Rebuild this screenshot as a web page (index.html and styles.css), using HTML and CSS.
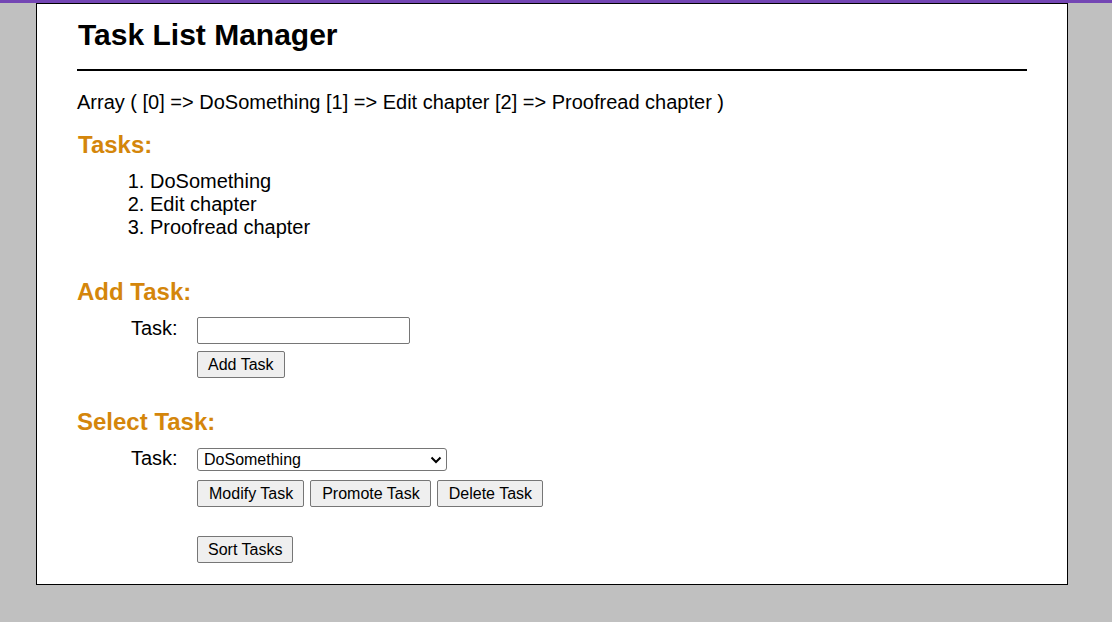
FILE: index.html
```html
<!DOCTYPE html>
<html lang="en">
<head>
<meta charset="utf-8">
<title>Task List Manager</title>
<link rel="stylesheet" href="styles.css">
</head>
<body>
<div class="page">
  <h1 class="title">Task List Manager</h1>
  <hr class="rule">
  <p class="dump">Array ( [0] =&gt; DoSomething [1] =&gt; Edit chapter [2] =&gt; Proofread chapter )</p>

  <h2 class="section-title section-title--tasks">Tasks:</h2>
  <ol class="task-list">
    <li>DoSomething</li>
    <li>Edit chapter</li>
    <li>Proofread chapter</li>
  </ol>

  <h2 class="section-title section-title--add">Add Task:</h2>
  <form class="task-form task-form--add">
    <label class="field-label field-label--add" for="newtask">Task:</label>
    <div class="controls">
      <input class="text-input" id="newtask" type="text">
      <div class="button-row button-row--add">
        <button class="btn btn--narrow" type="button">Add Task</button>
      </div>
    </div>
  </form>

  <h2 class="section-title section-title--select">Select Task:</h2>
  <form class="task-form task-form--select">
    <label class="field-label field-label--select" for="seltask">Task:</label>
    <div class="controls">
      <span class="select-wrap">
        <select class="select-input" id="seltask">
          <option>DoSomething</option>
          <option>Edit chapter</option>
          <option>Proofread chapter</option>
        </select>
        <svg class="select-arrow" width="12" height="8" viewBox="0 0 12 8" aria-hidden="true">
          <path d="M1.5 1.5 L6 6 L10.5 1.5" fill="none" stroke="#000" stroke-width="2" stroke-linecap="butt" stroke-linejoin="miter"/>
        </svg>
      </span>
      <div class="button-row button-row--actions">
        <button class="btn" type="button">Modify Task</button>
        <button class="btn" type="button">Promote Task</button>
        <button class="btn" type="button">Delete Task</button>
      </div>
      <div class="button-row button-row--sort">
        <button class="btn btn--narrow" type="button">Sort Tasks</button>
      </div>
    </div>
  </form>
</div>
</body>
</html>
```

FILE: styles.css
```css
html, body {
  margin: 0;
  padding: 0;
}

body {
  background: #c0c0c0;
  border-top: 3px solid #7446b4;
  font-family: "Liberation Sans", Arial, sans-serif;
  color: #000;
  min-height: 619px;
}

.page {
  margin-left: 36px;
  width: 950px;
  padding: 14px 40px 21px 40px;
  background: #fff;
  border: 1px solid #000;
  box-sizing: content-box;
}

.title {
  margin: 0;
  font-size: 30px;
  line-height: 34px;
  font-weight: bold;
  padding-left: 1px;
}

.rule {
  margin: 17px 0 0 0;
  height: 2px;
  border: none;
  background: #000;
}

.dump {
  margin: 20px 0 0 0;
  font-size: 20px;
  line-height: 23px;
}

.section-title {
  margin: 0;
  font-size: 24px;
  line-height: 28px;
  font-weight: bold;
  color: #d4860b;
}

.section-title--tasks { margin-top: 17px; padding-left: 1px; }
.section-title--add { margin-top: 39px; }
.section-title--select { margin-top: 30px; }

.task-list {
  margin: 11px 0 0 0;
  padding-left: 73px;
  font-size: 20px;
  line-height: 23px;
}

.task-form {
  display: grid;
  grid-template-columns: 66px auto;
  margin-left: 54px;
  align-items: start;
}

.task-form--add { margin-top: 11px; }
.task-form--select { margin-top: 12px; }

.field-label {
  font-size: 20px;
}

.field-label--add { line-height: 23px; }
.field-label--select { line-height: 21px; }

.controls {
  display: flex;
  flex-direction: column;
  align-items: flex-start;
}

.text-input {
  box-sizing: border-box;
  width: 213px;
  height: 27px;
  margin: 0;
  border: 1px solid #767676;
  border-radius: 2px;
  font: 16px "Liberation Sans", Arial, sans-serif;
  padding: 0 4px;
  background: #fff;
}

.select-wrap {
  position: relative;
  display: block;
  width: 250px;
  height: 23px;
}

.select-input {
  -webkit-appearance: none;
  appearance: none;
  box-sizing: border-box;
  display: block;
  width: 250px;
  height: 23px;
  margin: 0;
  border: 1px solid #767676;
  border-radius: 3px;
  font: 16px "Liberation Sans", Arial, sans-serif;
  padding: 0 24px 0 6px;
  background: #fff;
  color: #000;
}

.select-arrow {
  position: absolute;
  right: 5px;
  top: 8px;
  pointer-events: none;
}

.button-row {
  display: flex;
  gap: 6px;
}

.button-row--add { margin-top: 7px; }
.button-row--actions { margin-top: 9px; }
.button-row--sort { margin-top: 29px; }

.btn {
  box-sizing: border-box;
  height: 27px;
  margin: 0;
  padding: 0 10px 0 11px;
  border: 1px solid #767676;
  border-radius: 2px;
  background: #efefef;
  color: #000;
  font: 16px "Liberation Sans", Arial, sans-serif;
  line-height: 25px;
}

.btn--narrow {
  padding: 0 10px;
}
```
